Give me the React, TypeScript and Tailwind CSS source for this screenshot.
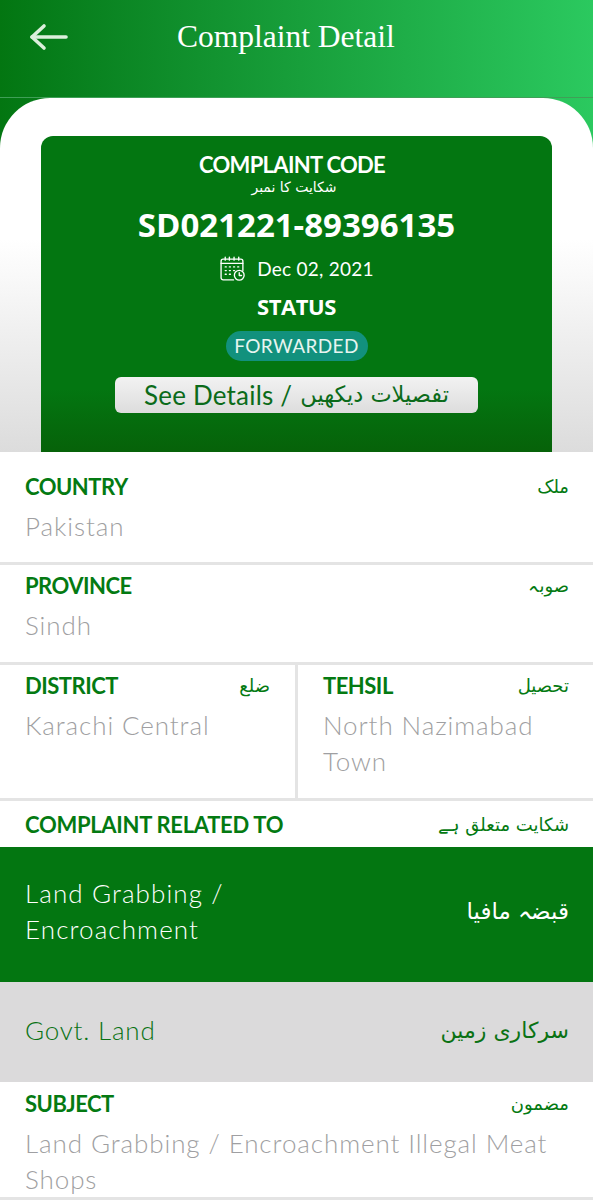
import React from 'react';

const URDU = "font-['DejaVu_Sans','Noto_Sans',sans-serif]";

const BackArrow = () => (
  <svg width="40" height="28" viewBox="0 0 40 28" fill="none" stroke="#dcefdc" strokeWidth="3.6" strokeLinecap="round" strokeLinejoin="round">
    <path d="M3 14h34" />
    <path d="M15 3 3 14l12 11" />
  </svg>
);

const CalendarClock = () => (
  <svg width="27" height="27" viewBox="0 0 26 26" fill="none" stroke="white" strokeWidth="1.3" strokeLinecap="round" strokeLinejoin="round">
    <path d="M14 24H4a2 2 0 0 1-2-2V6a2 2 0 0 1 2-2h17a2 2 0 0 1 2 2v9" />
    <path d="M2 8h21" />
    <path d="M6 2v3M10 2v3M14.500 2v3M19 2v3" />
    <path d="M6 11.500h1M10 11.500h1M14 11.500h1M18 11.500h1M6 15h1M10 15h1M14 15h1M6 18.500h1M10 18.500h1" />
    <circle cx="19.500" cy="19.500" r="4.700" />
    <path d="M19.500 17v2.700h2.200" />
  </svg>
);

const Field = ({
  label,
  urdu,
  value,
  className = '',
}: {
  label: string;
  urdu: string;
  value: string;
  className?: string;
}) => (
  <div className={`bg-white pl-[25px] pr-[24px] ${className}`}>
    <div className="flex items-center justify-between h-[24px]">
      <span className="text-[22px] font-bold text-[#047a12] tracking-[-0.5px]">{label}</span>
      <span className={`${URDU} text-[18px] text-[#047a12]`} dir="rtl">{urdu}</span>
    </div>
    <p className="mt-[10px] text-[26px] leading-[36px] font-light text-[#9f9fa2] tracking-[0.9px]">{value}</p>
  </div>
);

export default function App() {
  return (
    <div className="w-[593px] h-[1200px] overflow-hidden bg-white font-['Lato',sans-serif]">
      <header className="h-[98px] bg-gradient-to-r from-[#037611] to-[#2bc95f] flex items-start border-b border-[#3f9f57]">
        <div className="ml-[29px] mt-[23px]">
          <BackArrow />
        </div>
        <h1 className="ml-[108px] mt-[18px] text-[31.500px] leading-[38px] text-white font-['Liberation_Serif',serif]">
          Complaint Detail
        </h1>
      </header>

      <div className="h-[354px] bg-gradient-to-r from-[#037611] to-[#2bc95f]">
        <section className="h-full rounded-t-[50px] bg-gradient-to-b from-white from-40% to-[#dcdcdc] px-[41px] pt-[38px] flex flex-col">
          <div className="flex-1 rounded-t-[12px] bg-gradient-to-b from-[#037611] from-80% to-[#066209] flex flex-col items-center text-white pt-[16px]">
            <p className="mr-[9px] text-[22px] leading-[26px] font-bold tracking-[-0.7px]">COMPLAINT CODE</p>
            <p className={`${URDU} mr-[5px] text-[14px] leading-[18px]`} dir="rtl">شکایت کا نمبر</p>
            <p className="mt-[9px] text-[33px] leading-[40px] font-bold font-['Open_Sans',sans-serif]">SD021221-89396135</p>
            <div className="mt-[10px] flex items-center gap-[11px]">
              <CalendarClock />
              <span className="text-[19px] leading-[26px] tracking-[0.25px]">Dec 02, 2021</span>
            </div>
            <p className="mt-[11px] text-[22px] leading-[26px] font-bold font-['Open_Sans',sans-serif] tracking-[-0.4px]">STATUS</p>
            <span className="mt-[12px] h-[30px] w-[142px] rounded-full bg-[#12917d] flex items-center justify-center text-[19px] tracking-[0.4px] text-[#e8f5f0]">
              FORWARDED
            </span>
            <button
              type="button"
              className="mt-[16px] h-[36px] w-[363px] rounded-[6px] bg-gradient-to-b from-[#f2f2f2] to-[#dddddd] text-[#0b6b1a] flex items-center justify-center gap-[8px] text-[26px] tracking-[0.2px]"
            >
              <span>See Details /</span>
              <span className={`${URDU} text-[22.500px]`} dir="rtl">تفصیلات دیکھیں</span>
            </button>
          </div>
        </section>
      </div>

      <Field label="COUNTRY" urdu="ملک" value="Pakistan" className="pt-[22px] h-[113px] border-b-[3px] border-[#e4e4e4]" />
      <Field label="PROVINCE" urdu="صوبہ" value="Sindh" className="pt-[8px] h-[100px] border-b-[3px] border-[#e4e4e4]" />

      <div className="flex h-[136px] border-b-[3px] border-[#e4e4e4]">
        <Field label="DISTRICT" urdu="ضلع" value="Karachi Central" className="pt-[8px] w-[298px] pr-[25px] border-r-[3px] border-[#e4e4e4]" />
        <Field label="TEHSIL" urdu="تحصیل" value="North Nazimabad Town" className="pt-[8px] flex-1" />
      </div>

      <div className="h-[46px] pl-[25px] pr-[24px] flex items-center justify-between">
        <span className="text-[22px] font-bold text-[#047a12] tracking-[-0.3px]">COMPLAINT RELATED TO</span>
        <span className={`${URDU} text-[18px] text-[#047a12]`} dir="rtl">شکایت متعلق ہے</span>
      </div>

      <div className="h-[135px] bg-[#037611] pl-[25px] pr-[24px] flex items-center justify-between text-white">
        <p className="w-[240px] text-[26px] leading-[36px] font-light tracking-[1.1px] pb-[8px]">Land Grabbing / Encroachment</p>
        <span className={`${URDU} text-[23px] pb-[6px]`} dir="rtl">قبضہ مافیا</span>
      </div>

      <div className="h-[100px] bg-[#dbdadb] pl-[25px] pr-[24px] flex items-center justify-between text-[#0a7214]">
        <p className="text-[26px] font-light tracking-[0.8px] pb-[3px]">Govt. Land</p>
        <span className={`${URDU} text-[22px] pb-[3px]`} dir="rtl">سرکاری زمین</span>
      </div>

      <Field
        label="SUBJECT"
        urdu="مضمون"
        value="Land Grabbing / Encroachment Illegal Meat Shops"
        className="pt-[9px] h-[118px] border-b-[3px] border-[#e4e4e4]"
      />
    </div>
  );
}
